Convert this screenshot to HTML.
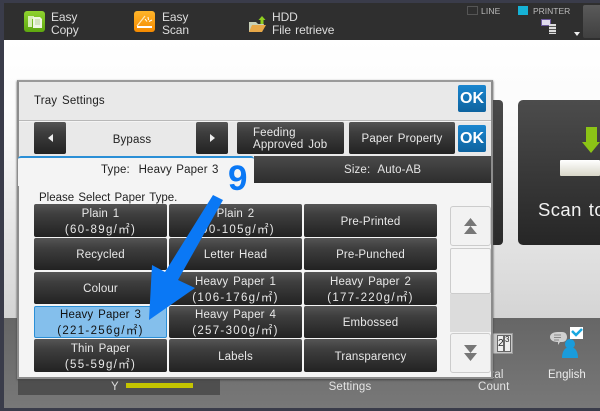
<!DOCTYPE html>
<html><head><meta charset="utf-8">
<style>
html,body{margin:0;padding:0;width:600px;height:411px;overflow:hidden;background:#3a3c4a}
*{box-sizing:border-box}
#p{position:relative;width:600px;height:411px;overflow:hidden;font-family:"Liberation Sans","Noto Sans CJK JP",sans-serif;font-size:11.5px;letter-spacing:.15px;word-spacing:1.5px}
.a{position:absolute}
.t{position:absolute;white-space:nowrap;line-height:13px}
.c{text-align:center}
.b{position:absolute;background:linear-gradient(#555 0,#3f3f3f 30%,#222 100%);border-radius:2px;color:#e8e8e8;text-align:center;display:flex;flex-direction:column;align-items:center;justify-content:center;line-height:16px;width:133px;padding-top:2px;white-space:nowrap}
.b i{font-style:normal;letter-spacing:1.3px;display:block}
.ok{position:absolute;background:linear-gradient(#1a86cf,#0e639f);color:#fff;font-weight:bold;font-size:16px;letter-spacing:0;text-align:center;border-radius:2px;width:28px;line-height:27px}
.top{color:#ddd;font-size:12px;line-height:12.5px;letter-spacing:-.1px;word-spacing:1px}
</style></head><body><div id="p">
<!-- background -->
<div class="a" style="left:4px;top:3px;width:596px;height:37px;background:#2f2f2f"></div>
<div class="a" style="left:4px;top:40px;width:596px;height:278px;background:linear-gradient(#fff 0,#fafafa 30%,#d4d4d4 100%)"></div>
<div class="a" style="left:4px;top:318px;width:596px;height:90px;background:linear-gradient(#666,#787878)"></div>
<!-- top bar -->
<div class="a" style="left:24px;top:11px;width:21px;height:21px;border-radius:3px;background:linear-gradient(#8fd22f,#5ea80f)"></div>
<svg class="a" style="left:24px;top:11px" width="21" height="21"><path d="M4 5h6v3H8v8H4z" fill="#d8eeb8"/><path d="M9 6h7l2 2v9H9z" fill="#eef6e2"/><path d="M11 9h5M11 11h5M11 13h5" stroke="#a8c880" stroke-width=".8"/></svg>
<div class="t top" style="left:51px;top:11px">Easy<br>Copy</div>
<div class="a" style="left:134px;top:11px;width:21px;height:21px;border-radius:3px;background:linear-gradient(#ffb52a,#f58a00)"></div>
<svg class="a" style="left:134px;top:11px" width="21" height="21"><path d="M3 15 L11 5" stroke="#ffe9b8" stroke-width="1.200" fill="none"/><rect x="3" y="15" width="15" height="2" fill="#fff"/><path d="M14 6l.5 3M18 9l-3 1.500M11 8l2 2.500" stroke="#fff" stroke-width="1"/></svg>
<div class="t top" style="left:162px;top:11px">Easy<br>Scan</div>
<svg class="a" style="left:248px;top:15px" width="20" height="18"><path d="M1 7h7l2 2h6l-2 8H1z" fill="#c8d0b8"/><path d="M4 10h14l-4 7H1z" fill="#e8a848"/><path d="M14 1l3.500 4h-2v4h-3V5h-2z" fill="#8fcf20"/></svg>
<div class="t top" style="left:272px;top:11px">HDD<br>File retrieve</div>
<div class="a" style="left:467px;top:6px;width:11px;height:9px;border:1px solid #555"></div>
<div class="t" style="left:481px;top:5px;color:#bbb;font-size:8.500px">LINE</div>
<div class="a" style="left:518px;top:6px;width:10px;height:9px;background:#16b2d6"></div>
<div class="t" style="left:533px;top:5px;color:#bbb;font-size:8.500px;letter-spacing:0">PRINTER</div>
<div class="a" style="left:541px;top:19px;width:10px;height:7px;background:#e0dcec;border:1px solid #6c5a9c"></div>
<div class="a" style="left:549px;top:24px;width:7px;height:10px;background:repeating-linear-gradient(#ddd 0 2px,#555 2px 3px)"></div>
<div class="a" style="left:574px;top:32px;border:3px solid transparent;border-top:4px solid #eee;border-bottom:0"></div>
<div class="a" style="left:583px;top:5px;width:17px;height:33px;border-radius:2px 0 0 2px;background:linear-gradient(#5a5a5a,#404040)"></div>
<!-- behind panels -->
<div class="a" style="left:480px;top:100px;width:23px;height:145px;background:linear-gradient(#4a4a4a,#2a2a2a);border-radius:4px"></div>
<div class="a" style="left:518px;top:100px;width:82px;height:145px;background:linear-gradient(#4c4c4c,#262626);border-radius:5px 0 0 5px"></div>
<svg class="a" style="left:580px;top:126px" width="20" height="28"><path d="M6 1h11v15h3L11 27 2 16h4z" fill="#8cc416"/></svg>
<div class="a" style="left:560px;top:160px;width:40px;height:16px;background:linear-gradient(#fff,#d8d6c8);border-radius:1px"></div>
<div class="t" style="left:538px;top:200px;color:#f2f2f2;font-size:18.500px;line-height:20px;letter-spacing:.4px">Scan to</div>
<!-- bottom -->
<div class="a" style="left:18px;top:378px;width:202px;height:17px;background:#4f4f4f"></div>
<div class="t" style="left:111px;top:381px;color:#ddd">Y</div>
<div class="a" style="left:126px;top:383px;width:67px;height:5px;background:#c4c400"></div>
<div class="t c" style="left:320px;top:381px;width:60px;color:#e4e4e4">Settings</div>
<div class="t" style="left:491px;top:369px;color:#e4e4e4">tal</div>
<div class="t" style="left:478px;top:381px;color:#e4e4e4">Count</div>
<div class="a" style="left:491px;top:333px;width:22px;height:21px;background:#c8c8c8;border:1px solid #999"></div>
<div class="a" style="left:497px;top:335px;width:7px;height:17px;background:#eee;border:1px solid #666"></div>
<div class="a" style="left:504px;top:335px;width:7px;height:17px;background:#eee;border:1px solid #666"></div>
<div class="t" style="left:498px;top:337px;color:#222;font-size:10px;letter-spacing:0">2</div>
<div class="t" style="left:505px;top:333px;color:#222;font-size:8px;letter-spacing:0">3</div>
<div class="t" style="left:548px;top:369px;color:#ececec;letter-spacing:0">English</div>
<svg class="a" style="left:548px;top:325px" width="38" height="36"><path d="M10 7h4c4 0 5 3 5 5s-1 5-5 5h-2l-2 3 0-3c-5 0-8-2-8-5s3-5 8-5z" fill="#d0d0d0"/><path d="M6 10h7M6 12.500h7M6 15h5" stroke="#888" stroke-width="1"/><rect x="22" y="2" width="13" height="12" fill="#fff"/><path d="M24 6l4 4 6-6" stroke="#18a8e0" stroke-width="2.500" fill="none"/><circle cx="22" cy="19" r="5" fill="#1a9cdc"/><path d="M14 33c0-7 3-11 8-11s8 4 8 11z" fill="#1a9cdc"/></svg>
<!-- dialog -->
<div class="a" style="left:17px;top:80px;width:476px;height:299px;background:#f4f4f4;border:2px solid #8c8c8c;border-top-color:#9a9a9a;box-shadow:0 1px 2px #444"></div>
<div class="a" style="left:19px;top:82px;width:472px;height:39px;background:#e9e9e9;border-bottom:1px solid #b8b8b8"></div>
<div class="a" style="left:19px;top:122px;width:472px;height:34px;background:#e9e9e9"></div>
<div class="t" style="left:34px;top:95px;color:#222">Tray Settings</div>
<div class="ok" style="left:458px;top:85px">OK</div>
<div class="b" style="left:34px;top:122px;width:32px;height:32px"></div>
<div class="a" style="left:48px;top:134px;border:4px solid transparent;border-right:5px solid #eee;border-left:0"></div>
<div class="t c" style="left:67px;top:134px;width:130px;color:#222">Bypass</div>
<div class="b" style="left:196px;top:122px;width:32px;height:32px"></div>
<div class="a" style="left:210px;top:134px;border:4px solid transparent;border-left:5px solid #eee;border-right:0"></div>
<div class="b" style="left:237px;top:122px;width:107px;height:32px;flex-direction:row;text-align:left;justify-content:flex-start;padding-left:16px;line-height:12.500px">Feeding<br>Approved Job</div>
<div class="b" style="left:349px;top:122px;width:106px;height:32px">Paper Property</div>
<div class="ok" style="left:458px;top:125px">OK</div>
<!-- tabs -->
<div class="a" style="left:18px;top:156px;width:236px;height:30px;background:#f4f4f4;border-top:2px solid #2b8fd6;border-radius:3px 3px 0 0"></div>
<div class="t" style="left:101px;top:164px;color:#222;word-spacing:1px">Type:&nbsp; Heavy Paper 3</div>
<div class="a" style="left:254px;top:156px;width:237px;height:27px;background:linear-gradient(#4a4a4a,#2d2d2d)"></div>
<div class="t" style="left:344px;top:164px;color:#e4e4e4;word-spacing:.5px">Size:&nbsp; Auto-AB</div>
<div class="t" style="left:39px;top:192px;color:#222;letter-spacing:0;word-spacing:1px">Please Select Paper Type.</div>
<!-- buttons -->
<div class="b" style="left:34px;top:204px;height:33px">Plain 1<i>(60-89g/㎡)</i></div>
<div class="b" style="left:169px;top:204px;height:33px">Plain 2<i>(90-105g/㎡)</i></div>
<div class="b" style="left:304px;top:204px;height:33px">Pre-Printed</div>
<div class="b" style="left:34px;top:238px;height:32px">Recycled</div>
<div class="b" style="left:169px;top:238px;height:32px">Letter Head</div>
<div class="b" style="left:304px;top:238px;height:32px">Pre-Punched</div>
<div class="b" style="left:34px;top:272px;height:32px">Colour</div>
<div class="b" style="left:169px;top:272px;height:33px">Heavy Paper 1<i>(106-176g/㎡)</i></div>
<div class="b" style="left:304px;top:272px;height:33px">Heavy Paper 2<i>(177-220g/㎡)</i></div>
<div class="b" style="left:34px;top:306px;height:32px;background:#84bfec;border:1px solid #2b8fd6;color:#111;padding-top:1px">Heavy Paper 3<i>(221-256g/㎡)</i></div>
<div class="b" style="left:169px;top:306px;height:32px">Heavy Paper 4<i>(257-300g/㎡)</i></div>
<div class="b" style="left:304px;top:306px;height:32px">Embossed</div>
<div class="b" style="left:34px;top:339px;height:33px">Thin Paper<i>(55-59g/㎡)</i></div>
<div class="b" style="left:169px;top:339px;height:33px">Labels</div>
<div class="b" style="left:304px;top:339px;height:33px">Transparency</div>
<!-- scrollbar -->
<div class="a" style="left:450px;top:206px;width:41px;height:40px;background:#f2f2f2;border:1px solid #ccc;border-radius:3px"></div>
<svg class="a" style="left:463px;top:217px" width="15" height="18"><path d="M7.500 1L14 9H1zM7.500 9L14 17H1z" fill="#777"/></svg>
<div class="a" style="left:450px;top:248px;width:41px;height:46px;background:#f5f5f5;border:1px solid #ccc;border-radius:2px"></div>
<div class="a" style="left:450px;top:294px;width:41px;height:38px;background:#dcdcdc"></div>
<div class="a" style="left:450px;top:333px;width:41px;height:40px;background:#f2f2f2;border:1px solid #ccc;border-radius:3px"></div>
<svg class="a" style="left:463px;top:344px" width="15" height="18"><path d="M1 1H14L7.500 9zM1 9H14L7.500 17z" fill="#777"/></svg>
<!-- annotation -->
<svg class="a" style="left:0;top:0" width="600" height="411"><path d="M213 195L223 200L178 280L195 288L149 320L152 265L165 272z" fill="#0a78f5"/></svg>
<div class="t" style="left:228px;top:161px;color:#0a78f5;font-weight:bold;font-size:35px;line-height:36px;letter-spacing:0">9</div>
</div></body></html>
